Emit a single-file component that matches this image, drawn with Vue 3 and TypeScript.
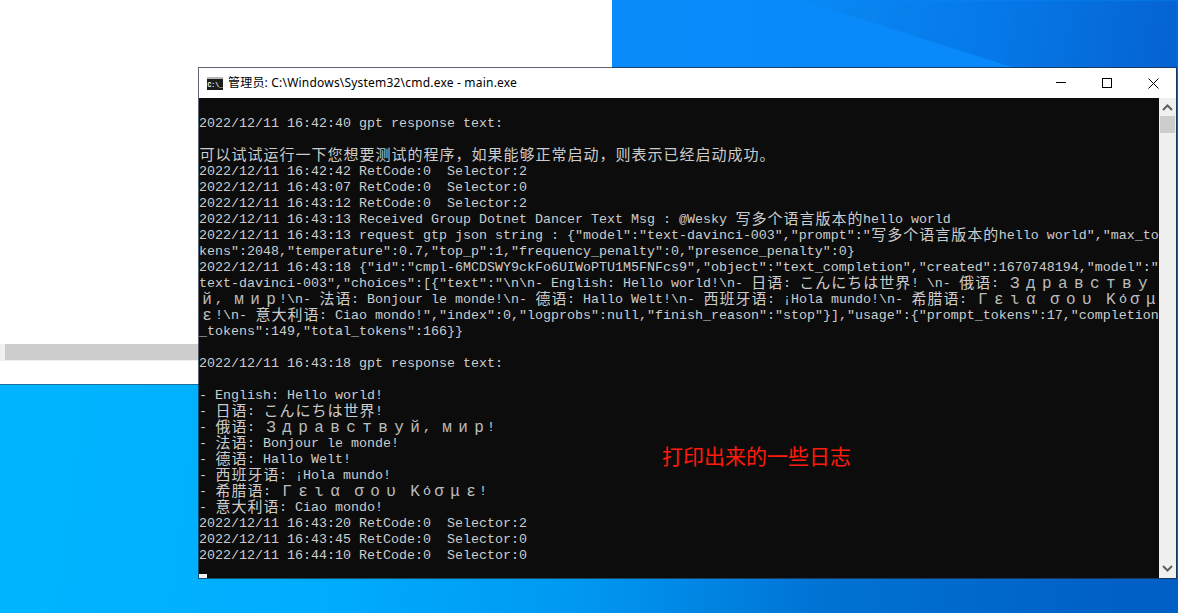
<script setup lang="ts">
interface Seg { text: string; wide: boolean; glyph: boolean }

const rows: string[] = [
  '',
  '2022/12/11 16:42:40 gpt response text:',
  '',
  '可以试试运行一下您想要测试的程序，如果能够正常启动，则表示已经启动成功。',
  '2022/12/11 16:42:42 RetCode:0  Selector:2',
  '2022/12/11 16:43:07 RetCode:0  Selector:0',
  '2022/12/11 16:43:12 RetCode:0  Selector:2',
  '2022/12/11 16:43:13 Received Group Dotnet Dancer Text Msg : @Wesky 写多个语言版本的hello world',
  String.raw`2022/12/11 16:43:13 request gtp json string : {"model":"text-davinci-003","prompt":"写多个语言版本的hello world","max_to`,
  String.raw`kens":2048,"temperature":0.7,"top_p":1,"frequency_penalty":0,"presence_penalty":0}`,
  String.raw`2022/12/11 16:43:18 {"id":"cmpl-6MCDSWY9ckFo6UIWoPTU1M5FNFcs9","object":"text_completion","created":1670748194,"model":"`,
  String.raw`text-davinci-003","choices":[{"text":"\n\n- English: Hello world!\n- 日语: こんにちは世界! \n- 俄语: Здравству`,
  String.raw`й, мир!\n- 法语: Bonjour le monde!\n- 德语: Hallo Welt!\n- 西班牙语: ¡Hola mundo!\n- 希腊语: Γεια σου Κόσμ`,
  String.raw`ε!\n- 意大利语: Ciao mondo!","index":0,"logprobs":null,"finish_reason":"stop"}],"usage":{"prompt_tokens":17,"completion`,
  String.raw`_tokens":149,"total_tokens":166}}`,
  '',
  '2022/12/11 16:43:18 gpt response text:',
  '',
  '- English: Hello world!',
  '- 日语: こんにちは世界!',
  '- 俄语: Здравствуй, мир!',
  '- 法语: Bonjour le monde!',
  '- 德语: Hallo Welt!',
  '- 西班牙语: ¡Hola mundo!',
  '- 希腊语: Γεια σου Κόσμε!',
  '- 意大利语: Ciao mondo!',
  '2022/12/11 16:43:20 RetCode:0  Selector:2',
  '2022/12/11 16:43:45 RetCode:0  Selector:0',
  '2022/12/11 16:44:10 RetCode:0  Selector:0',
]

const isNarrow = (c: string): boolean => c.charCodeAt(0) < 128 || c === '¡' || c === 'ό'
const isGlyph = (c: string): boolean => {
  const n = c.charCodeAt(0)
  return n >= 0x370 && n <= 0x4ff
}

function parse(line: string): Seg[] {
  const out: Seg[] = []
  let run = ''
  for (const c of line) {
    if (isNarrow(c)) {
      run += c
    } else {
      if (run) out.push({ text: run, wide: false, glyph: false })
      run = ''
      out.push({ text: c, wide: true, glyph: isGlyph(c) })
    }
  }
  if (run) out.push({ text: run, wide: false, glyph: false })
  return out
}

const lines = rows.map(parse)
</script>

<template>
  <div class="desktop">
    <div class="light"></div>

    <div class="browser">
      <div class="hbar"><div class="hthumb"></div></div>
    </div>

    <section class="console">
      <header class="titlebar">
        <svg class="appicon" width="16" height="13" viewBox="0 0 16 13">
          <rect width="16" height="13" fill="#1c1c1c" />
          <rect x="0" y="0" width="16" height="2" fill="#b8b8b8" />
          <text x="0.5" y="10" class="icontext">C:\_</text>
        </svg>
        <span class="title">管理员: C:\Windows\System32\cmd.exe - main.exe</span>
        <div class="controls">
          <div class="ctl">
            <svg width="10" height="10" viewBox="0 0 10 10"><path d="M0 4.5H10" stroke="#000" fill="none" /></svg>
          </div>
          <div class="ctl">
            <svg width="10" height="10" viewBox="0 0 10 10"><rect x=".5" y=".5" width="9" height="9" stroke="#000" fill="none" /></svg>
          </div>
          <div class="ctl">
            <svg width="11" height="11" viewBox="0 0 11 11"><path d="M.5 .5L10.5 10.5M10.5 .5L.5 10.5" stroke="#000" fill="none" /></svg>
          </div>
        </div>
      </header>

      <div class="body">
        <div class="term">
          <div v-for="(segs, i) in lines" :key="i" class="row">
            <template v-for="(s, j) in segs" :key="j">
              <span v-if="s.wide" class="wide" :class="{ glyph: s.glyph }">{{ s.text }}</span>
              <span v-else class="narrow">{{ s.text }}</span>
            </template>
          </div>
          <div class="cursorrow"><div class="cursor"></div></div>
        </div>

        <aside class="scroll">
          <svg class="chev" width="11" height="7" viewBox="0 0 11 7">
            <path d="M1 6L5.5 1.5L10 6" stroke="#606060" stroke-width="2" fill="none" />
          </svg>
          <div class="thumb"></div>
          <div class="spacer"></div>
          <svg class="chev down" width="11" height="7" viewBox="0 0 11 7">
            <path d="M1 1L5.5 5.5L10 1" stroke="#606060" stroke-width="2" fill="none" />
          </svg>
        </aside>
      </div>

      <div class="note">打印出来的一些日志</div>
    </section>
  </div>
</template>

<style>
html, body { margin: 0; background: #0078e0; }
</style>

<style scoped>
.desktop {
  position: relative;
  width: 1178px;
  height: 613px;
  overflow: hidden;
  background:
    linear-gradient(90deg, #0a8ef8, #0888fc) top left / 100% 70px no-repeat,
    linear-gradient(97deg, #00b6ff 0%, #00aeff 30%, #0098f2 52%, #0072d4 72%, #0060c6 95%);
}
.light {
  position: absolute;
  inset: 0;
  background: linear-gradient(100deg, #0a8cf5 60%, #0678e8 78%, #0558c4 100%);
  clip-path: polygon(68% 0, 86% 11%, 100% 24%, 100% 0);
  filter: blur(1px);
}
.browser {
  position: absolute;
  left: 0;
  top: 0;
  width: 612px;
  height: 384px;
  background: #fff;
  border-bottom: 1px solid #1f6f9c;
}
.hbar {
  position: absolute;
  left: 0;
  top: 344px;
  width: 100%;
  height: 17px;
  background: #f0f0f0;
}
.hthumb {
  margin-left: 5px;
  height: 16px;
  background: #cdcdcd;
}
.console {
  position: absolute;
  left: 198px;
  top: 67px;
  width: 979px;
  height: 512px;
  box-sizing: border-box;
  display: flex;
  flex-direction: column;
  border: 1px solid rgba(30, 40, 55, 0.72);
  background-clip: padding-box;
}
.titlebar {
  height: 30px;
  flex: none;
  display: flex;
  align-items: center;
  background: #fff;
  color: #000;
}
.appicon { margin-left: 8px; flex: none; }
.icontext {
  font-family: "Liberation Mono", monospace;
  font-size: 6.4px;
  font-weight: 700;
  fill: #fff;
}
.title {
  margin-left: 5px;
  margin-bottom: 2px;
  font-family: "Noto Sans", "Noto Sans CJK SC", sans-serif;
  font-size: 12px;
  letter-spacing: 0.2px;
  white-space: pre;
}
.controls { margin-left: auto; display: flex; height: 100%; }
.ctl {
  width: 46px;
  display: flex;
  align-items: center;
  justify-content: center;
}
.body { flex: 1; min-height: 0; display: flex; }
.term {
  flex: 1;
  min-width: 0;
  overflow: hidden;
  padding-top: 1px;
  background: #0c0c0c;
  color: #cccccc;
  font-family: "Liberation Mono", monospace;
  font-size: 13.333px;
}
.row {
  height: 16px;
  display: flex;
  align-items: flex-start;
}
.narrow {
  flex: none;
  height: 16px;
  line-height: 18px;
  white-space: pre;
}
.wide {
  flex: none;
  width: 16px;
  height: 16px;
  text-align: center;
  font-family: "Noto Sans CJK SC", sans-serif;
  font-size: 15px;
  line-height: 14px;
}
.wide.glyph {
  font-family: "Liberation Mono", monospace;
  font-size: 16px;
  line-height: 18px;
  color: #bdbdbd;
}
.cursorrow { height: 15px; display: flex; align-items: flex-end; }
.cursor { width: 8px; height: 4px; background: #f2f2f2; }
.scroll {
  width: 17px;
  flex: none;
  background: #f0f0f0;
  display: flex;
  flex-direction: column;
  align-items: center;
}
.chev { flex: none; margin-top: 6px; }
.chev.down { margin-top: 0; margin-bottom: 6px; }
.thumb {
  margin-top: 5px;
  width: 15px;
  height: 17px;
  background: #cdcdcd;
  flex: none;
}
.spacer { flex: 1; }
.note {
  position: absolute;
  left: 463px;
  top: 374px;
  font-family: "Noto Sans CJK SC", sans-serif;
  font-size: 21px;
  line-height: 26px;
  color: #ff1a0a;
  white-space: pre;
}
</style>
